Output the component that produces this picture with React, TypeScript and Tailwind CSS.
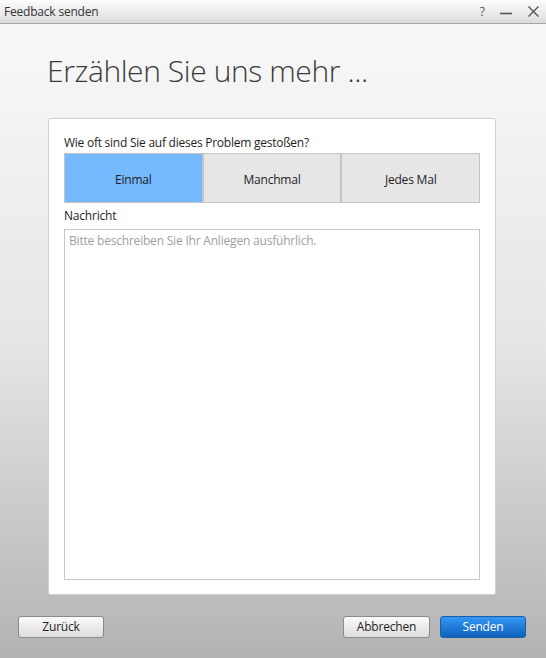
import React, { useState } from 'react'

const font = { fontFamily: '"Open Sans", "Noto Sans", sans-serif' }

export default function App() {
  const [freq, setFreq] = useState('Einmal')
  const options = ['Einmal', 'Manchmal', 'Jedes Mal']

  return (
    <div className="w-[546px] h-[658px] flex flex-col overflow-hidden text-[#1e1e1e]" style={font}>
      {/* Title bar */}
      <div className="h-[24px] flex items-center justify-between pl-[4px] pr-[6px] bg-gradient-to-b from-[#fdfdfd] to-[#dcdcdc] border-b border-[#a8a8a8]">
        <span className="text-[12px] text-[#333] tracking-[-0.2px]">Feedback senden</span>
        <div className="flex items-center gap-[14px] text-[#555]">
          <span className="text-[12px]">?</span>
          <svg width="14" height="14" viewBox="0 0 14 14">
            <path d="M1 8.5h12" stroke="#555" strokeWidth="1.6" />
          </svg>
          <svg width="13" height="13" viewBox="0 0 13 13">
            <path d="M1.5 1.5l10 10M11.5 1.5l-10 10" stroke="#555" strokeWidth="1.4" />
          </svg>
        </div>
      </div>

      {/* Body */}
      <div className="flex-1 flex flex-col bg-gradient-to-b from-[#f8f8f8] via-[#e6e6e6] to-[#b3b3b3]">
        <h1 className="pl-[47px] pt-[27px] h-[94px] text-[30px] font-light text-[#3a3a3a] tracking-[-0.4px] leading-[40px]">
          Erzählen Sie uns mehr ...
        </h1>

        <div className="ml-[48px] mr-[50px] h-[477px] bg-white border border-[#cfcfcf] rounded-[2px] px-[15px] pt-[14px] pb-[14px] flex flex-col">
          <p className="text-[12px] leading-[20px] tracking-[-0.25px]">Wie oft sind Sie auf dieses Problem gestoßen?</p>
          <div className="flex h-[50px]">
            {options.map((o) => (
              <button
                key={o}
                onClick={() => setFreq(o)}
                className={`flex-1 border border-[#c4c4c4] pt-[3px] text-[12px] tracking-[-0.2px] ${
                  freq === o ? 'bg-[#74b8fe]' : 'bg-[#e6e6e6]'
                }`}
              >
                {o}
              </button>
            ))}
          </div>
          <p className="text-[12px] leading-[20px] mt-[3px] tracking-[-0.2px]">Nachricht</p>
          <textarea
            className="flex-1 mt-[3px] border border-[#c8c8c8] resize-none px-[4px] py-[2px] text-[12px] tracking-[-0.2px] outline-none placeholder:text-[#a0a0a0]"
            placeholder="Bitte beschreiben Sie Ihr Anliegen ausführlich."
          />
        </div>

        <div className="flex items-center justify-between pl-[18px] pr-[20px] mt-[21px]">
          <button className="w-[86px] h-[22px] rounded-[3px] border border-[#8a8a8a] bg-gradient-to-b from-[#fafafa] to-[#dedede] text-[12px] tracking-[-0.2px]">
            Zurück
          </button>
          <div className="flex gap-[10px]">
            <button className="w-[87px] h-[22px] rounded-[3px] border border-[#8a8a8a] bg-gradient-to-b from-[#fafafa] to-[#dedede] text-[12px] tracking-[-0.2px]">
              Abbrechen
            </button>
            <button className="w-[86px] h-[22px] rounded-[3px] border border-[#1a5fa8] bg-gradient-to-b from-[#3598f5] to-[#0c62bd] text-white text-[12px] tracking-[-0.2px]">
              Senden
            </button>
          </div>
        </div>
      </div>
    </div>
  )
}
